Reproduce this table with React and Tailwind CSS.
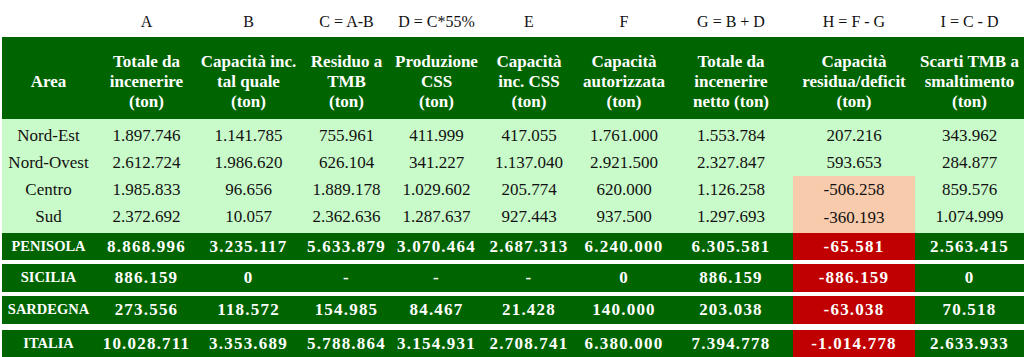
const cols =
  "grid grid-cols-[93px_103px_101px_95px_85px_100px_90px_124px_122px_1fr]";

const formulas = ["", "A", "B", "C = A-B", "D = C*55%", "E", "F", "G = B + D", "H = F - G", "I = C - D"];

const headers = [
  ["Area"],
  ["Totale da", "incenerire", "(ton)"],
  ["Capacità inc.", "tal quale", "(ton)"],
  ["Residuo a", "TMB", "(ton)"],
  ["Produzione", "CSS", "(ton)"],
  ["Capacità", "inc. CSS", "(ton)"],
  ["Capacità", "autorizzata", "(ton)"],
  ["Totale da", "incenerire", "netto (ton)"],
  ["Capacità", "residua/deficit", "(ton)"],
  ["Scarti TMB a", "smaltimento", "(ton)"],
];

const areas = [
  ["Nord-Est", "1.897.746", "1.141.785", "755.961", "411.999", "417.055", "1.761.000", "1.553.784", "207.216", "343.962"],
  ["Nord-Ovest", "2.612.724", "1.986.620", "626.104", "341.227", "1.137.040", "2.921.500", "2.327.847", "593.653", "284.877"],
  ["Centro", "1.985.833", "96.656", "1.889.178", "1.029.602", "205.774", "620.000", "1.126.258", "-506.258", "859.576"],
  ["Sud", "2.372.692", "10.057", "2.362.636", "1.287.637", "927.443", "937.500", "1.297.693", "-360.193", "1.074.999"],
];

const totals = [
  { row: ["PENISOLA", "8.868.996", "3.235.117", "5.633.879", "3.070.464", "2.687.313", "6.240.000", "6.305.581", "-65.581", "2.563.415"], h: "h-[27px]", mt: "" },
  { row: ["SICILIA", "886.159", "0", "-", "-", "-", "0", "886.159", "-886.159", "0"], h: "h-[28px]", mt: "mt-[4px]" },
  { row: ["SARDEGNA", "273.556", "118.572", "154.985", "84.467", "21.428", "140.000", "203.038", "-63.038", "70.518"], h: "h-[28px]", mt: "mt-[4px]" },
  { row: ["ITALIA", "10.028.711", "3.353.689", "5.788.864", "3.154.931", "2.708.741", "6.380.000", "7.394.778", "-1.014.778", "2.633.933"], h: "h-[27px]", mt: "mt-[6px]" },
];

function DataRow({ row, index }) {
  const last = index === areas.length - 1;
  const salmon = index >= 2;
  return (
    <div className={`${cols} ${last ? "h-[30px] pb-[3px]" : "h-[27px]"}`}>
      {row.map((cell, i) => (
        <div
          key={i}
          className={`flex items-center justify-center ${
            i === 8 && salmon ? "bg-[#f8cbad]" : ""
          } ${last && i === 8 ? "-mb-[3px]" : ""}`}
        >
          {cell}
        </div>
      ))}
    </div>
  );
}

function TotalRow({ row, h, mt }) {
  return (
    <div className={`${cols} ${h} ${mt} bg-[#006400] text-white font-bold`}>
      {row.map((cell, i) => (
        <div
          key={i}
          className={`flex items-center justify-center ${
            i === 0 ? "text-[14.5px]" : "tracking-[1.2px]"
          } ${i === 8 ? "bg-[#c00000]" : ""}`}
        >
          {cell}
        </div>
      ))}
    </div>
  );
}

export default function App() {
  return (
    <div
      className="w-[1024px] h-[357px] bg-white pl-[2px] text-[17px] text-[#111] overflow-hidden"
      style={{ fontFamily: '"Liberation Serif", serif' }}
    >
      <div className={`${cols} h-[37px] text-[16px] leading-[18px]`}>
        {formulas.map((f, i) => (
          <div key={i} className="flex items-end justify-center pb-[6px]">
            {f}
          </div>
        ))}
      </div>

      <div className={`${cols} h-[82px] bg-[#006400] text-white font-bold leading-[20px] pt-[8px]`}>
        {headers.map((lines, i) => (
          <div key={i} className="flex flex-col items-center justify-center text-center whitespace-nowrap">
            {lines.map((l, j) => (
              <span key={j}>{l}</span>
            ))}
          </div>
        ))}
      </div>

      <div className="bg-[#c9fac9] pt-[3px]">
        {areas.map((row, i) => (
          <DataRow key={i} row={row} index={i} />
        ))}
      </div>

      {totals.map((t, i) => (
        <TotalRow key={i} {...t} />
      ))}
    </div>
  );
}
